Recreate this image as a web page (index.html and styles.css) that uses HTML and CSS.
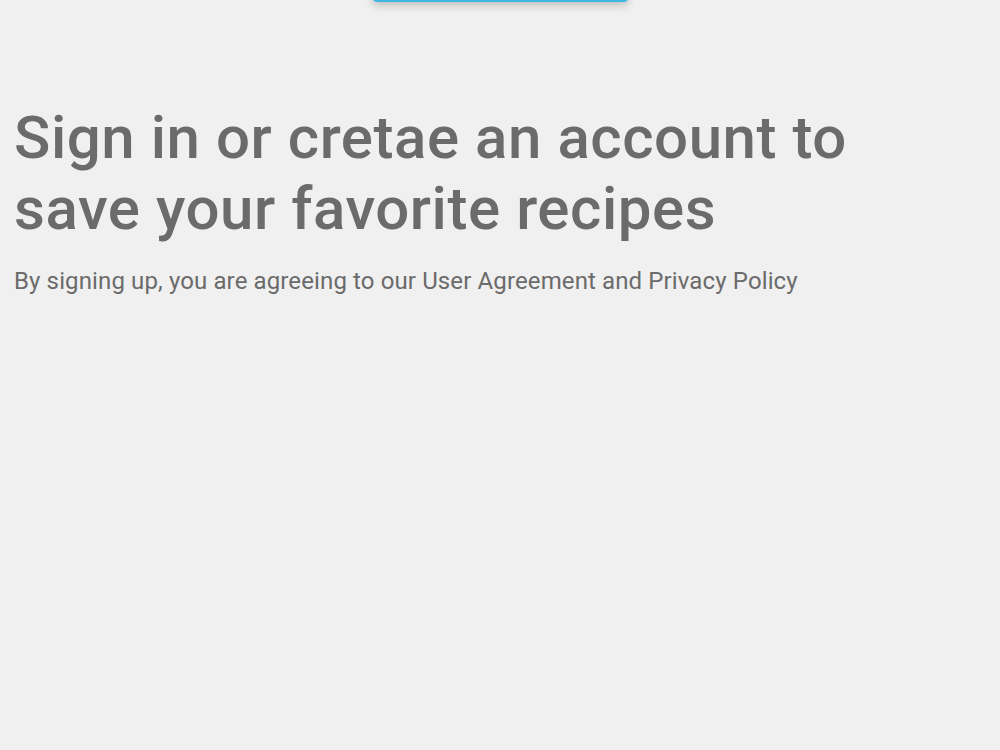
FILE: index.html
```html
<!DOCTYPE html>
<html lang="en">
<head>
    <meta charset="UTF-8">
    <meta name="viewport" content="width=device-width, initial-scale=1.0">
    <title>Sign in</title>
    <link rel="stylesheet" href="styles.css">
</head>
<body>

<div class="page">
    <div class="top-bar">
        <button class="signin-button" aria-label="Sign in"></button>
    </div>
    <div class="intro">
        <h1>Sign in or cretae an account to save your favorite recipes</h1>
        <p class="terms">By signing up, you are agreeing to our User Agreement and Privacy Policy</p>
    </div>
</div>

</body>
</html>
```

FILE: styles.css
```css
body {
    font-family: Roboto, "Noto Sans", sans-serif;
    margin: 0;
    background-color: #f0f0f0;
    color: #6b6b6b;
}
.page {
    min-height: 750px;
}
.top-bar {
    display: flex;
    justify-content: center;
    height: 2px;
}
.signin-button {
    width: 255px;
    height: 46px;
    margin-top: -44px;
    border: none;
    border-radius: 4px;
    background-color: #3fb6e2;
    box-shadow: 0 3px 10px rgba(0, 0, 0, 0.22);
}
.intro {
    padding: 100px 14px 0 14px;
}
h1 {
    font-size: 60px;
    font-weight: 500;
    line-height: 71px;
    letter-spacing: 0.55px;
    margin: 0;
    max-width: 880px;
}
.terms {
    font-size: 24px;
    letter-spacing: 0.12px;
    margin: 23px 0 0 0;
}
```
